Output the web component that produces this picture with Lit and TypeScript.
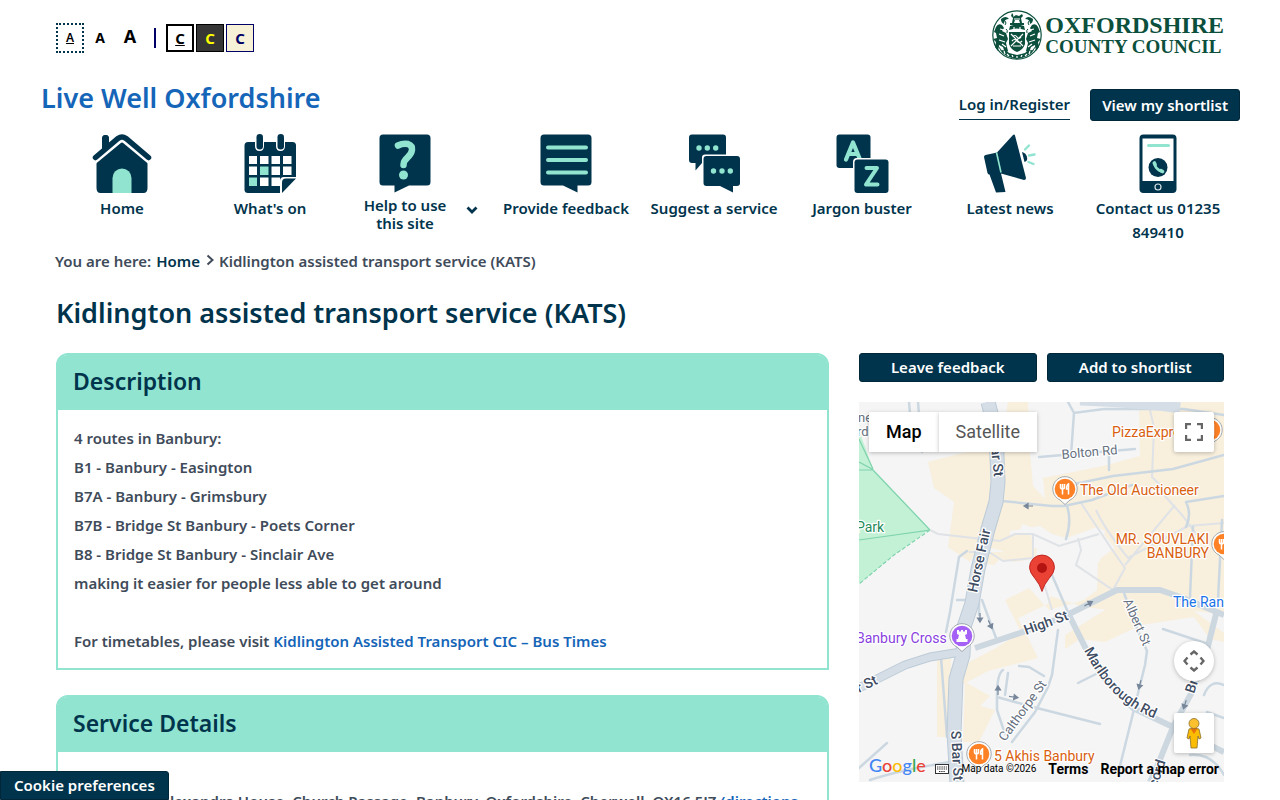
import { LitElement, html, svg, css } from "lit";
import { customElement } from "lit/decorators.js";

const crest = svg`
  <circle cx="25" cy="25" r="24.200" fill="#fff" stroke="#0b4f3c" stroke-width="1.200"/>
  <g fill="#0b4f3c">
    <path d="M20 3q2 2 1 4l3-2 3 1 3-2 1 2-2 2 1 5h-2l-1-3h-4l-1 3h-2l1-5-2-2zM18 13h14v2H18z"/>
    <path d="M18 16q7-3 14 0l1 4q-8-3-16 0z"/>
    <path d="M4 17q2-4 6-2l2 3-2 3 4 2 2 6-2 4 2 8-3 2-2-6-4-2-1 6-3-4 1-5-3-3 4-1-1-5-2-1z"/>
    <path d="M46 17q-2-4-6-2l-2 3 2 3-4 2-2 6 2 4-2 8 3 2 2-6 4-2 1 6 3-4-1-5 3-3-4-1 1-5 2-1z"/>
    <path d="M17 22h16v12q-2 6-8 8-6-2-8-8z"/>
    <path d="M9 9q5-4 8 0-5 0-5 5-3-1-3-5zM41 9q-5-4-8 0 5 0 5 5 3-1 3-5z"/>
    <path d="M8 40q7 0 9 3l8 2 8-2q2-3 9-3-4 7-17 9-13-2-17-9z"/>
  </g>
  <g fill="none" stroke="#fff" stroke-width="1.200">
    <path d="M19 24l12 12M31 24L19 36M21 27q2-3 4 0t4 0M20 31q2.500-3 5 0t5 0M21 36h8"/>
    <path d="M7 24l5 2M7 30l6 2M10 34l4 3M43 24l-5 2M43 30l-6 2M40 34l-4 3M8 19l4 1M42 19l-4 1M22 9h6M22 17v3M28 17v3"/>
    <path d="M15 44l2 2M20 45l1 2M25 46v2M30 45l-1 2M35 44l-2 2M12 41l1 3M38 41l-1 3"/>
  </g>
  <g fill="none" stroke="#0b4f3c" stroke-width="1">
    <path d="M13 11q2 2 0 4M37 11q-2 2 0 4M14 19q2 1 1 4M36 19q-2 1-1 4M6 36l3 4M44 36l-3 4"/>
  </g>`;

const NAVY = "#00344c";
const MINT = "#90e4d0";

const icons = {
  home: svg`
    <path fill="${NAVY}" d="M10 15V5q0-4 3.500-4T17 5v6zM4.500 27v27q0 5 4 5h43q4 0 4-5V27L30 6z"/>
    <path fill="none" stroke="#fff" stroke-width="9" stroke-linejoin="round" d="M0 27L26 5.500q4-3 8 0L60 27"/>
    <path fill="none" stroke="${NAVY}" stroke-width="5.500" stroke-linecap="round" d="M3.500 23.500L26 4.500q4-3 8 0l22.500 19"/>
    <path fill="${NAVY}" d="M10 15V5q0-4 3.500-4T17 5v6z"/>
    <path fill="${MINT}" d="M20.500 59V44a9.500 9.500 0 0 1 19 0v15z"/>`,
  calendar: svg`
    <rect x="4.500" y="8" width="51.500" height="51" rx="3.500" fill="${NAVY}"/>
    <g fill="#fff">
      <path d="M9 22h8v8H9zm11 0h8.500v8H20zM31.500 22H40v8h-8.500zM43 22h8.500v8H43zM9 32.500h8V41H9zm22.500 0H40V41h-8.500zM43 32.500h8.500V41H43zM20 43.500h8.500V52H20zM31.500 43.500H40V52h-8.500z"/>
      <path d="M15 6h9v6q0 5-4.500 5T15 12zm21 0h9v6q0 5-4.500 5T36 12z"/>
      <path d="M57 43h-13q-4 0-4 4v13h17z"/>
    </g>
    <path fill="${MINT}" d="M20 32.500h8.500V41H20zM9 43.500h8V52H9z"/>
    <rect x="16.500" y="0" width="6.500" height="15.500" rx="3.200" fill="${NAVY}"/>
    <rect x="37.500" y="0" width="6.500" height="15.500" rx="3.200" fill="${NAVY}"/>
    <path fill="${NAVY}" d="M56 44.500H46q-4 0-4 4V59z"/>`,
  help: svg`
    <path fill="${NAVY}" d="M8 .5h44q3.500 0 3.500 3.500v44q0 3.500-3.500 3.500H34L19.500 58.500v-7H8q-3.500 0-3.500-3.500V4Q4.500.5 8 .5z"/>
    <path fill="none" stroke="${MINT}" stroke-width="6.500" stroke-linecap="round" d="M23 11.500q5-2.500 10-1.500 4.500 1.500 4 6-.5 4-4.500 7.500t-4 7.500"/>
    <circle cx="28.500" cy="41" r="4.500" fill="${MINT}"/>`,
  feedback: svg`
    <path fill="${NAVY}" d="M8 .5h44q3.500 0 3.500 3.500v44q0 3.500-3.500 3.500H41.500v7L27 51.500H8q-3.500 0-3.500-3.500V4Q4.500.5 8 .5z"/>
    <path stroke="${MINT}" stroke-width="4" stroke-linecap="round" d="M12 13.500h38M12 26h38M12 38.500h38"/>`,
  suggest: svg`
    <path fill="${NAVY}" d="M8 .5h31q3 0 3 3V29H18l-6.500 7.500V29H8q-3 0-3-3V3.500q0-3 3-3z"/>
    <path fill="#fff" d="M21 20.500h33v8H26v21h-8V23.500q0-3 3-3z"/>
    <path fill="${NAVY}" d="M22.500 22H53q3 0 3 3v24q0 3-3 3h-4v6.500L36 52H22.500q-3 0-3-3V25q0-3 3-3z"/>
    <g fill="${MINT}"><circle cx="15" cy="14" r="2.700"/><circle cx="23.300" cy="14" r="2.700"/><circle cx="31.700" cy="14" r="2.700"/><circle cx="29.500" cy="37" r="2.700"/><circle cx="38" cy="37" r="2.700"/><circle cx="46.300" cy="37" r="2.700"/></g>`,
  jargon: svg`
    <rect x="4.500" y=".5" width="34" height="33.500" rx="3" fill="${NAVY}"/>
    <path fill="none" stroke="${MINT}" stroke-width="4.200" stroke-linecap="round" stroke-linejoin="round" d="M14 25.500L21 8.500 28 25.500M16.500 20h9"/>
    <rect x="21" y="24" width="37" height="37" rx="4" fill="#fff"/>
    <rect x="22.500" y="25.500" width="34" height="33.500" rx="3" fill="${NAVY}"/>
    <path fill="none" stroke="${MINT}" stroke-width="4" stroke-linecap="round" stroke-linejoin="round" d="M34.500 34H45L34 50.500h11.500"/>`,
  news: svg`
    <path fill="${NAVY}" d="M4 23q0-1.500 1.500-2L17 18.500 33 1q1.500-1 2 .5L46 44q0 2-2 2L21 39.500l4.500 18.500-9.500.5L9.500 40.500q-1.500 0-2-1.500z"/>
    <path stroke="${MINT}" stroke-width="1.600" d="M16.500 18.500l4.500 20"/>
    <path fill="${NAVY}" d="M42 18q4 1 5 5t-2.500 5z"/>
    <path stroke="${MINT}" stroke-width="2.400" stroke-linecap="round" d="M45 15.500l4-4M49 21.500l5.500-1M48.500 28l5 2"/>`,
  contact: svg`
    <rect x="11.500" y=".5" width="37" height="58.500" rx="4" fill="${NAVY}"/>
    <path fill="#fff" d="M14.500 4.500h31V47h-31z"/>
    <path stroke="${MINT}" stroke-width="3" stroke-linecap="round" d="M20.500 11.500h20"/>
    <circle cx="30" cy="33.500" r="9.500" fill="${NAVY}"/>
    <path fill="none" stroke="${MINT}" stroke-width="2.600" stroke-linecap="round" d="M26.500 29.500q1 6 7.500 8"/>
    <path stroke="${MINT}" stroke-width="3.600" stroke-linecap="round" d="M26.300 29l.8 1.600M33 36.700l1.600.8"/>
    <circle cx="30" cy="53" r="3" fill="none" stroke="#d5e2e6" stroke-width="1.200"/>`,
};

const navItems = [
  { label: "Home", icon: icons.home },
  { label: "What's on", icon: icons.calendar },
  { label: "Help to use this site", icon: icons.help, menu: true },
  { label: "Provide feedback", icon: icons.feedback },
  { label: "Suggest a service", icon: icons.suggest },
  { label: "Jargon buster", icon: icons.jargon },
  { label: "Latest news", icon: icons.news },
  { label: "Contact us 01235 849410", icon: icons.contact },
];

const fork = svg`<path stroke="#fff" stroke-width="1.500" fill="none" d="M-4.500-5v3q0 2 2 2t2-2v-3M-2.500-5V5.500M3.500 5.500V-5q-2 1-2 5h2"/>`;
const pin = (x: number, y: number, fill: string, glyph: unknown) => svg`
  <g transform="translate(${x} ${y})">
    <path fill="#fff" stroke="#8d949c" stroke-width=".8" d="M0 15.500l-5-4.500a12.200 12.200 0 1 1 10 0z"/>
    <circle r="10.300" fill="${fill}"/>${glyph}
  </g>`;
const arrow = (x: number, y: number, a: number) => svg`
  <path transform="translate(${x} ${y}) rotate(${a})" d="M-4 0H2M1-2.500L5 0 1 2.500z" fill="#77869a" stroke="#77869a" stroke-width="1.200"/>`;

const map = svg`
  <rect x="859" y="402" width="365" height="380" fill="#f5f5f5"/>
  <g fill="#f8efdd">
    <path d="M1008 402h20l2 50 3 34 12 13-2-21 60-12 37-10-1-55h85v213l-50-5-40-4-25 5-25-3-34-11-2 8-30 14 20 40-50 13-28 15-2-18 38-20 25-16-16-32 24-12 20 22 35-10 13-10 1-30 17-12-10-12-25 6-28-8-30-10-8 30-30-8z"/>
    <path d="M912 466l78-20 4 34-14 62-10 20-22-15 6-45-20-14-6-26z"/>
    <path d="M1065 635l48-30 70-2 41 30v9l-14-3-16-22-53 8-36 17-25-3-15 10z"/>
    <path d="M937 655h14v82h-14zM975 660l30-8-40 30 25 14-10 10 15 4-16 32h-16l2-60z"/>
    <path d="M985 552h18v-16h35l-2 22-22 4-14-3-6 6-14-2z"/>
  </g>
  <path fill="#f5f5f5" d="M1010 531l30-5 21 14 36-13 8 4-5 30-38 26-15-38-37-3z"/>
  <path fill="#f8efdd" d="M1003 541l8-6h20l4 22-20 4-12-6z"/>
  <path fill="#c3f1d5" d="M859 430l14 39 57 60-36 26-35 29z"/>
  <g fill="none" stroke="#7fd3ae" stroke-width="1.200">
    <path d="M859 462l13 7 58 61-71 10M873 469l-14-30M859 470h14"/>
    <path stroke-dasharray="4 2" d="M930 530l-36 25-35 29"/>
  </g>
  <g fill="none" stroke="#dfe2e6" stroke-width="2">
    <path d="M930 530l8 4 62 7 15-7h18l26 12 40-12M1033 534v24l-30 3-14-9-20 0M1040 570l12 40M1081 503l30 45 14 20-12 22-37-25 5-15-3-12M1125 565l50-60M1096 510q8 18 32 48l60-32 36-3M1164 495l18 20 15 20M1148 402l6 25-2 50 10 10"/>
  </g>
  <g fill="none" stroke="#ccd8e1" stroke-width="2.500" stroke-linecap="round">
    <path d="M909 402l3 35M918 402l4 50M1068 402l6 11 30-4h80l40 6M1074 413l-3 42M1039 457l96-8M1109 452v18M1065 486l48-10 60-7 51-14M1002 501l50 5h12l28-6 40-15M1067 506q5 15-1 33M1186 502l38-6M1186 502q6 12 0 25M1222 520l-4 80M1193 527l-3 70"/>
    <path d="M967 551l-8 6-9 55-4 20M957 600h16M979 590v25M982 600l14 38M1052 575l18 42M1058 630l-6 45-4 12-13 25-23 30M1124 593l14 38 9 20-2 14-26 105M1163 629l45 15M1019 666l10 1 15 9M1078 683l18-9M1003 670q-6 4-6 25v15l8 24M1005 695q2-15 3-22M997 697l36 10 67 17M941 657l6 80M887 743l-28 25M1224 685q-14-6-20 10M1207 712l17 6M1190 755q22-2 34 20M870 780q30-10 80-18"/>
  </g>
  <g fill="none" stroke-linejoin="round">
    <path stroke="#bccbd7" stroke-width="9" d="M859 688l46-23 25-8 31-5"/>
    <path stroke="#ccd7e0" stroke-width="6" d="M975 648l45-15 43-16 20-10 34-17h43l23 8 41 17M1070 617l15 30 18 30 30 31 40 19 51 25M1217 610l-10 40-14 40-20 37-16 40-7 15"/>
    <path stroke="#bccbd7" stroke-width="15" d="M988 402l8 30 2 50-2 20-8 27-10 40-6 34-8 24-1 28-7 24-2 54 3 51"/>
    <path stroke="#d5dee7" stroke-width="7" d="M859 688l46-23 25-8 31-5"/>
    <path stroke="#d5dee7" stroke-width="13" d="M988 402l8 30 2 50-2 20-8 27-10 40-6 34-8 24-1 28-7 24-2 54 3 51"/>
    <path stroke="#d5dee7" stroke-width="11" d="M1080 400q70 3 100 8"/>
  </g>
  ${arrow(1029, 506, 180)}${arrow(980, 617, 90)}${arrow(990, 624, 65)}${arrow(1088, 604, -28)}
  ${arrow(998, 691, -90)}${arrow(1013, 697, 8)}${arrow(1140, 684, 105)}${arrow(1185, 704, 108)}
  <path id="marl" fill="none" d="M1084 650q18 36 41 52 12 9 26 15"/>
  <g class="lbl road">
    <text class="minor" x="858" y="422">ne</text><text class="minor" x="857" y="436">rd</text>
    <text transform="translate(991 448) rotate(84)">ar St</text>
    <text transform="translate(977 593) rotate(-78)">Horse Fair</text>
    <text transform="translate(1026 635) rotate(-20)">High St</text>
    <text><textPath href="#marl">Marlborough Rd</textPath></text>
    <text transform="translate(859 693) rotate(-26)">r St</text>
    <text transform="translate(951 731) rotate(87)">S Bar St</text>
    <text transform="translate(1194 694) rotate(-72)">Br</text>
    <text transform="translate(1157 788) rotate(-72)">cord</text>
  </g>
  <g class="lbl minor">
    <text transform="translate(1062 459) rotate(-5)">Bolton Rd</text>
    <text transform="translate(1123 601) rotate(66)">Albert St</text>
    <text transform="translate(1005 742) rotate(-54)">Calthorpe St</text>
  </g>
  <g class="lbl">
    <text x="856" y="532" fill="#1f8a5a">Park</text>
    <text x="856" y="643" fill="#8a3fe0">Banbury Cross</text>
    <g fill="#d9600f">
      <text x="1112" y="437">PizzaExpress</text>
      <text x="1080" y="495">The Old Auctioneer</text>
      <text x="1209" y="544" text-anchor="end">MR. SOUVLAKI</text>
      <text x="1209" y="558" text-anchor="end">BANBURY</text>
      <text x="994" y="761">5 Akhis Banbury</text>
    </g>
    <text x="1173" y="607" fill="#1a73e8">The Randolph</text>
  </g>
  ${pin(1065, 489, "#ff8126", fork)}${pin(1210, 430, "#ff8126", fork)}${pin(1224, 544, "#ff8126", fork)}${pin(979, 754, "#ff8126", fork)}
  ${pin(962, 636, "#a561f5", svg`<path fill="#fff" d="M-5-6h2v1.500h2V-6h2v1.500h2V-6h2v4l-2 1 1 4h1.500v3h-11V3H-4l1-4-2-1z"/>`)}
  <path fill="#ea4335" stroke="#b31412" stroke-width=".8" d="M1042 591.500q-2-7-7-13-5.500-6-5.500-11a12.500 12.500 0 0 1 25 0q0 5-5.500 11-5 6-7 13z"/>
  <circle cx="1042" cy="568" r="5" fill="#b31412"/>`;

@customElement("app-root")
export class AppRoot extends LitElement {
  static styles = css`
    :host {
      display: block;
      background: #fff;
      color: #404b5a;
      font: 600 15px/24px "Noto Sans", sans-serif;
    }
    * { box-sizing: border-box; }
    h1, h2, p, dl, dd, dt, ul { margin: 0; padding: 0; }
    a { color: #1565b8; text-decoration: none; }
    button { font: inherit; padding: 0; margin: 0; cursor: pointer; }
    .page { padding: 0 40px; }
    .tools {
      display: flex;
      justify-content: space-between;
      align-items: flex-start;
      padding: 10px 16px 0;
    }
    .access { display: flex; align-items: center; gap: 2px; padding-top: 13px; height: 43px; }
    .access button {
      width: 28px;
      height: 28px;
      background: none;
      border: 0;
      color: #000;
      font-weight: 700;
    }
    .access .small { font-size: 12px; font-weight: 600; height: 30px; border: 2px dotted #00344c; text-decoration: underline; }
    .access .medium { font-size: 14px; }
    .access .large { font-size: 18px; padding-bottom: 6px; }
    .rule { width: 2px; height: 20px; margin: 0 8px; background: #006; }
    .access .plain { border: 2px solid #000; text-decoration: underline; background: #fff; }
    .access .dark { border: 1px solid #000; color: #ff0; background: #363636; }
    .access .cream { border: 1px solid #006; color: #006; background: #f7f1d8; }
    .logo { display: flex; align-items: center; gap: 3px; color: #0b4f3c; }
    .logo svg { width: 50px; height: 50px; }
    .words { font-family: "Liberation Serif", serif; font-weight: 700; }
    .words span { display: block; }
    .county { font-size: 24px; line-height: 24px; }
    .council { font-size: 19px; line-height: 20px; }
    .brand { display: flex; justify-content: space-between; padding: 20px 0 0 1px; }
    .site { font-size: 27px; line-height: 36px; }
    .account { display: flex; gap: 20px; align-items: flex-start; padding-top: 9px; }
    .account a { color: #00344c; line-height: 30px; border-bottom: 1px solid #00344c; }
    .solid {
      background: #00344c;
      color: #fff;
      border: 1px solid #00263a;
      border-radius: 3px;
    }
    .account .solid { height: 32px; padding: 0 11px; }
    nav { padding: 13px 8px 0; }
    .menu { display: grid; grid-template-columns: repeat(8, 1fr); list-style: none; }
    .item { display: flex; flex-direction: column; align-items: center; padding: 0 6px; color: #00344c; text-align: center; }
    .item svg { width: 60px; height: 60px; margin-bottom: 2px; display: block; }
    .item.sub { display: grid; grid-template-columns: 108px 26px; justify-content: center; justify-items: center; align-items: start; line-height: 18px; }
    .item.sub .art { grid-column: 1; grid-row: 1; }
    .item.sub .name { grid-column: 1; grid-row: 2; padding: 0 8px; }
    .item.sub .chev { grid-column: 2; grid-row: 2; width: 12px; height: 8px; margin: 10px 0 0; }
    .crumbs { display: flex; align-items: center; padding: 5px 16px 0 15px; }
    .crumbs a { color: #00344c; margin-left: 5px; }
    .crumbs svg { width: 8px; height: 12px; margin: 0 5px 2px 6px; }
    h1 { color: #00344c; font-size: 27px; line-height: 40px; font-weight: 600; padding: 20px 16px 0; }
    .cols { display: grid; grid-template-columns: 773fr 365fr; gap: 30px; padding: 20px 16px 0; align-items: start; }
    .card { border: 2px solid #90e4d0; border-radius: 12px 12px 0 0; margin-bottom: 25px; }
    .card h2 { background: #90e4d0; color: #00344c; font-size: 23px; line-height: 52px; font-weight: 600; padding: 0 15px 3px; border-radius: 9px 9px 0 0; }
    .card .text { padding: 14px 16px 12px; line-height: 29px; }
    .card dl { display: grid; grid-template-columns: 86px 1fr; padding: 35px 16px; line-height: 29px; }
    .actions { display: grid; grid-template-columns: 1fr 1fr; gap: 10px; margin-bottom: 20px; }
    .actions .solid { height: 29px; padding-bottom: 2px; }
    .map { position: relative; height: 380px; font-family: Roboto, sans-serif; }
    .map > svg { display: block; width: 100%; height: 100%; }
    .lbl { font-family: Roboto, sans-serif; font-size: 14px; font-weight: 400; paint-order: stroke; stroke: #fff; stroke-width: 2.5px; stroke-linejoin: round; }
    .road { fill: #3f4d63; font-weight: 500; }
    .minor { fill: #667080; font-size: 13px; font-weight: 400; }
    .map button { background: #fff; border: 0; box-shadow: 0 1px 4px rgba(0, 0, 0, 0.25); }
    .types { position: absolute; left: 10px; top: 10px; display: flex; }
    .types button { height: 40px; padding: 0 17px; font-size: 18px; font-weight: 400; color: #565656; }
    .types .on { font-weight: 500; color: #000; }
    .ctl { position: absolute; right: 10px; width: 40px; height: 40px; border-radius: 2px; display: grid; place-items: center; }
    .full { top: 10px; }
    .map .pan { top: 239px; border-radius: 50%; }
    .peg { top: 311px; }
    .google { position: absolute; left: 10px; bottom: 5px; font: 500 18px/24px Lato, sans-serif; }
    .b { color: #4285f4; } .r { color: #ea4335; } .y { color: #fbbc04; } .g { color: #34a853; }
    .legal { position: absolute; right: 5px; bottom: 3px; display: flex; align-items: center; gap: 12px; line-height: 20px; font-size: 14px; }
    .legal span { font-size: 10px; font-weight: 400; color: #000; }
    .legal a { color: #000; font-weight: 700; }
    .legal svg { width: 14px; height: 10px; display: block; }
    .cookie { position: fixed; left: 0; bottom: 0; height: 29px; padding: 0 13px 2px; border-radius: 0 3px 0 0; }
  `;

  render() {
    return html`
      <div class="page">
        <header>
          <div class="tools">
            <div class="access">
              <button class="small" aria-label="Small text">A</button>
              <button class="medium" aria-label="Medium text">A</button>
              <button class="large" aria-label="Large text">A</button>
              <span class="rule"></span>
              <button class="plain" aria-label="Default colours">C</button>
              <button class="dark" aria-label="Dark colours">C</button>
              <button class="cream" aria-label="Cream colours">C</button>
            </div>
            <a class="logo" href="#">
              <svg viewBox="0 0 50 50">${crest}</svg>
              <span class="words"><span class="county">OXFORDSHIRE</span><span class="council">COUNTY COUNCIL</span></span>
            </a>
          </div>
          <div class="brand">
            <a class="site" href="#">Live Well Oxfordshire</a>
            <div class="account">
              <a href="#">Log in/Register</a>
              <button class="solid">View my shortlist</button>
            </div>
          </div>
          <nav>
            <ul class="menu">
              ${navItems.map((n) => html`<li>
                <a class="item ${n.menu ? "sub" : ""}" href="#">
                  <svg class="art" viewBox="0 0 60 60">${n.icon}</svg>
                  <span class="name">${n.label}</span>
                  ${n.menu ? html`<svg class="chev" viewBox="0 0 12 8"><path d="M1.500 1.500L6 6l4.500-4.500" fill="none" stroke="#00344c" stroke-width="2.800"/></svg>` : ""}
                </a>
              </li>`)}
            </ul>
          </nav>
        </header>
        <div class="crumbs">
          <span>You are here:</span><a href="#">Home</a>
          <svg viewBox="0 0 8 12"><path d="M1.500 1.500L6.500 6l-5 4.500" fill="none" stroke="#404b5a" stroke-width="2"/></svg>
          <span>Kidlington assisted transport service (KATS)</span>
        </div>
        <h1>Kidlington assisted transport service (KATS)</h1>
        <div class="cols">
          <main>
            <section class="card">
              <h2>Description</h2>
              <div class="text">
                <p>4 routes in Banbury:</p>
                <p>B1 - Banbury - Easington</p>
                <p>B7A - Banbury - Grimsbury</p>
                <p>B7B - Bridge St Banbury - Poets Corner</p>
                <p>B8 - Bridge St Banbury - Sinclair Ave</p>
                <p>making it easier for people less able to get around</p>
                <br />
                <p>For timetables, please visit <a href="#">Kidlington Assisted Transport CIC – Bus Times</a></p>
              </div>
            </section>
            <section class="card">
              <h2>Service Details</h2>
              <dl>
                <dt>Address</dt>
                <dd>Alexandra House, Church Passage, Banbury, Oxfordshire, Cherwell, OX16 5JZ <a href="#">(directions to venue)</a></dd>
              </dl>
            </section>
          </main>
          <aside>
            <div class="actions">
              <button class="solid">Leave feedback</button>
              <button class="solid">Add to shortlist</button>
            </div>
            <div class="map">
              <svg viewBox="859 402 365 380" preserveAspectRatio="xMidYMid slice">${map}</svg>
              <div class="types"><button class="on">Map</button><button>Satellite</button></div>
              <button class="ctl full" aria-label="Full screen"><svg width="18" height="18"><path d="M1 6V1h5M12 1h5v5M17 12v5h-5M6 17H1v-5" fill="none" stroke="#666" stroke-width="2.400"/></svg></button>
              <button class="ctl pan" aria-label="Pan"><svg width="22" height="22"><path d="M7.500 4.500L11 1.500l3.500 3M17.500 7.500l3 3.500-3 3.500M14.500 17.500l-3.500 3-3.500-3M4.500 14.500l-3-3.500 3-3.500" fill="none" stroke="#666" stroke-width="2.400"/></svg></button>
              <button class="ctl peg" aria-label="Street view"><svg width="18" height="32"><path d="M4 12q5-2 10 0l2 9-2 1-1-3-1 12H6L5 19l-1 3-2-1z" fill="#fbbc04" stroke="#8a6d2b" stroke-width=".8"/><path d="M5.500 11.500h7L9 17z" fill="#e8710a"/><circle cx="9" cy="6.500" r="5" fill="#fbc02d" stroke="#8a6d2b" stroke-width=".8"/></svg></button>
              <div class="google"><span class="b">G</span><span class="r">o</span><span class="y">o</span><span class="b">g</span><span class="g">l</span><span class="r">e</span></div>
              <div class="legal">
                <svg viewBox="0 0 14 10"><rect x=".5" y=".5" width="13" height="9" fill="#fff" stroke="#333"/><path d="M2 3h10M2 5h10M4 7.500h6" stroke="#333" stroke-width="1.200" stroke-dasharray="1.400 .8"/></svg>
                <span>Map data ©2026</span><a href="#">Terms</a><a href="#">Report a map error</a>
              </div>
            </div>
          </aside>
        </div>
      </div>
      <button class="solid cookie">Cookie preferences</button>
    `;
  }
}
